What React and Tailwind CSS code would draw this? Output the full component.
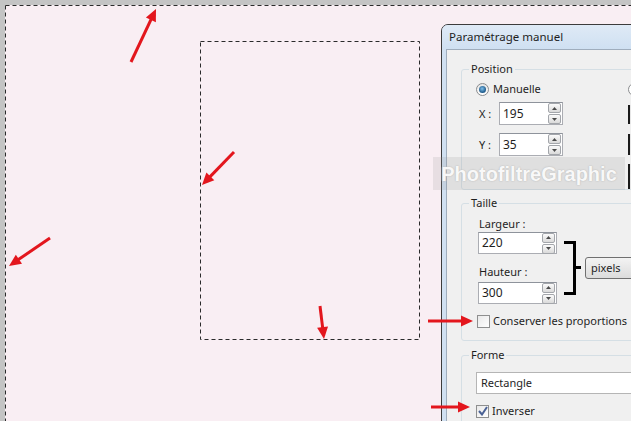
import React from 'react';

const ui = "font-['Segoe_UI','Noto_Sans',sans-serif] text-[11px] leading-[16px] text-[#1e1e1e]";

function Arrow({ x1, y1, x2, y2 }) {
  const dx = x2 - x1;
  const dy = y2 - y1;
  const len = Math.hypot(dx, dy);
  const ux = dx / len;
  const uy = dy / len;
  const hl = 12;
  const hw = 5.5;
  const bx = x2 - ux * hl;
  const by = y2 - uy * hl;
  const pts = [
    [x2, y2],
    [bx - uy * hw, by + ux * hw],
    [bx + uy * hw, by - ux * hw],
  ]
    .map((p) => p.join(','))
    .join(' ');
  return (
    <g>
      <line x1={x1} y1={y1} x2={bx + ux} y2={by + uy} stroke="#e3161d" strokeWidth="3" />
      <polygon points={pts} fill="#e3161d" />
    </g>
  );
}

function SpinButtons() {
  return (
    <div className="flex flex-col gap-[1px]">
      <div className="w-[13px] h-[10px] border border-[#a3a6ab] rounded-[2px] bg-linear-to-b from-[#fbfbfb] to-[#dadada] flex items-center justify-center">
        <svg width="5" height="3" viewBox="0 0 5 3">
          <path d="M0 3 L2.5 0 L5 3 Z" fill="#4a4a4a" />
        </svg>
      </div>
      <div className="w-[13px] h-[10px] border border-[#a3a6ab] rounded-[2px] bg-linear-to-b from-[#fbfbfb] to-[#dadada] flex items-center justify-center">
        <svg width="5" height="3" viewBox="0 0 5 3">
          <path d="M0 0 L5 0 L2.5 3 Z" fill="#4a4a4a" />
        </svg>
      </div>
    </div>
  );
}

function NumField({ value, w }) {
  return (
    <div className={`${w} border border-[#abadb3] border-t-[#8e939b] bg-white flex items-center justify-between pl-[3px] pr-[1px] text-[12px]`}>
      <span>{value}</span>
      <SpinButtons />
    </div>
  );
}

function Radio() {
  return (
    <span className="w-[13px] h-[13px] rounded-full border border-[#8a8c8e] bg-linear-to-b from-[#e4e4e4] to-white flex items-center justify-center">
      <span className="w-[7px] h-[7px] rounded-full bg-[radial-gradient(circle_at_45%_40%,#7fc0ec,#205c8c_65%)]" />
    </span>
  );
}

function Check({ checked }) {
  return (
    <span className="w-[13px] h-[13px] border border-[#8e8f8f] bg-linear-to-br from-[#e9e9e9] to-white flex items-center justify-center">
      {checked && (
        <svg width="10" height="10" viewBox="0 0 10 10">
          <path d="M1 5 L4 8.5 L9 1" fill="none" stroke="#4b6295" strokeWidth="2" />
        </svg>
      )}
    </span>
  );
}

export default function App() {
  return (
    <div className={`relative w-[631px] h-[421px] overflow-hidden bg-[#c4c4c4] pl-[5px] pt-[5px] ${ui}`}>
      <div className="w-full h-full bg-[#f9eef3]" />

      <div className="absolute left-[441px] top-[24px] w-[230px] h-[440px] border border-[#3c3c3c] rounded-tl-[7px] bg-[#d0e0f1] flex flex-col">
        <div className="shrink-0 h-[24px] pl-[7px] flex items-center text-[11.5px] bg-linear-to-b from-[#dfeaf6] to-[#cfe0f2] rounded-tl-[6px]">
          Paramétrage manuel
        </div>
        <div className="flex-1 ml-[4px] border-l border-t border-[#9fadbd] bg-[#f0f0f0] pl-[14px] pt-[11px] flex flex-col">
          <fieldset className="shrink-0 w-[200px] h-[129px] border border-[#d5dfe5] rounded-[3px]">
            <legend className="ml-[7px] px-[2px]">Position</legend>
            <div className="flex pl-[14px] pt-[4px]">
              <div className="w-[152px] flex flex-col">
                <div className="h-[16px] flex items-center gap-[4px]">
                  <Radio />
                  <span>Manuelle</span>
                </div>
                <div className="mt-[5px] flex items-center">
                  <span className="w-[23px] pl-[3px]">X :</span>
                  <NumField value="195" w="w-[64px] h-[23px]" />
                </div>
                <div className="mt-[8px] flex items-center">
                  <span className="w-[23px] pl-[3px]">Y :</span>
                  <NumField value="35" w="w-[64px] h-[23px]" />
                </div>
              </div>
              <div className="flex flex-col">
                <span className="w-[13px] h-[13px] mt-[2px] rounded-full border border-[#8a8c8e] bg-white" />
                <div className="mt-[9px] w-[20px] h-[19px] border-l-2 border-[#1a1a1a] bg-[#e6e6e6]" />
                <div className="mt-[10px] w-[20px] h-[21px] border-l-2 border-[#1a1a1a] bg-[#e6e6e6]" />
                <div className="mt-[9px] w-[20px] h-[25px] border-l-2 border-[#1a1a1a] bg-[#e6e6e6]" />
              </div>
            </div>
          </fieldset>

          <fieldset className="shrink-0 mt-[5px] w-[200px] h-[146px] border border-[#d5dfe5] rounded-[3px]">
            <legend className="ml-[7px] px-[2px]">Taille</legend>
            <div className="pl-[16px] pt-[5px] flex flex-col">
              <div className="flex items-start">
                <div className="w-[79px] flex flex-col">
                  <span className="pl-[1px]">Largeur :</span>
                  <NumField value="220" w="w-[79px] h-[22px]" />
                  <span className="mt-[10px] pl-[1px]">Hauteur :</span>
                  <div className="mt-[2px]">
                    <NumField value="300" w="w-[79px] h-[22px]" />
                  </div>
                </div>
                <svg className="ml-[7px] mt-[25px]" width="17" height="54" viewBox="0 0 17 54">
                  <path d="M0 1.5 H10.5 V52.5 H0 M10.5 26.5 H17" fill="none" stroke="#000" strokeWidth="3" />
                </svg>
                <div className="ml-[4px] mt-[41px] w-[80px] h-[22px] border border-[#707070] rounded-[3px] bg-linear-to-b from-[#f3f3f3] to-[#dcdcdc] pl-[5px] flex items-center">
                  pixels
                </div>
              </div>
              <div className="mt-[9px] -ml-[1px] h-[16px] flex items-center gap-[3px]">
                <Check />
                <span>Conserver les proportions</span>
              </div>
            </div>
          </fieldset>

          <fieldset className="shrink-0 mt-[6px] w-[200px] h-[100px] border border-[#d5dfe5] rounded-[3px]">
            <legend className="ml-[7px] px-[2px]">Forme</legend>
            <div className="pl-[14px] pt-[9px] flex flex-col">
              <div className="w-[200px] h-[22px] border border-[#b5b5b5] bg-white pl-[4px] flex items-center">
                Rectangle
              </div>
              <div className="mt-[9px] h-[16px] flex items-center gap-[3px]">
                <Check checked />
                <span>Inverser</span>
              </div>
            </div>
          </fieldset>
        </div>
      </div>

      <svg className="absolute inset-0" width="631" height="421">
        <line x1="5.5" y1="5.5" x2="631" y2="5.5" stroke="#2a2a2a" strokeDasharray="4 3" />
        <line x1="5.5" y1="5.5" x2="5.5" y2="421" stroke="#2a2a2a" strokeDasharray="4 3" />
        <rect x="200.5" y="41.5" width="219" height="298" fill="none" stroke="#2a2a2a" strokeDasharray="4 3" />
        <Arrow x1={131} y1={62} x2={156} y2={9} />
        <Arrow x1={234} y1={152} x2={202} y2={185} />
        <Arrow x1={50} y1={238} x2={9} y2={266} />
        <Arrow x1={320} y1={306} x2={324} y2={339} />
        <Arrow x1={428} y1={321} x2={473} y2={321} />
        <Arrow x1={431} y1={407} x2={470} y2={407} />
      </svg>

      <div className="absolute left-[433px] top-[157px] w-[192px] h-[33px] bg-[rgba(150,150,150,0.18)] flex items-center justify-center">
        <span className="font-['Liberation_Sans',Arial,sans-serif] font-bold text-[20px] leading-none text-[#f8f8f8] [text-shadow:0_0_1px_#b8b8b8,0_0_2px_#c4c4c4]">
          PhotofiltreGraphic
        </span>
      </div>
    </div>
  );
}
